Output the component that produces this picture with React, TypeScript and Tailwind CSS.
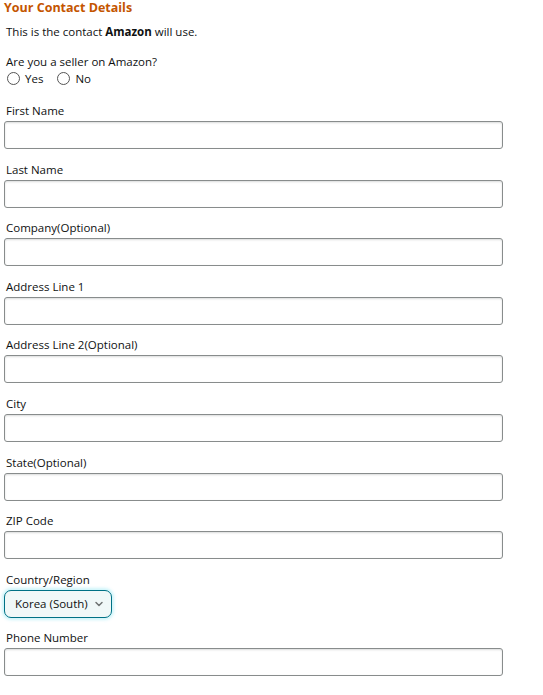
import { ChevronDown } from 'lucide-react'

const fields = [
  'First Name',
  'Last Name',
  'Company(Optional)',
  'Address Line 1',
  'Address Line 2(Optional)',
  'City',
  'State(Optional)',
  'ZIP Code',
]

function Field({ label }: { label: string }) {
  return (
    <div className="h-[58.6px]">
      <div className="pl-[2px] text-[11.5px] leading-[17px] text-[#0f1111]">{label}</div>
      <div className="mt-[2px] h-[28px] w-[499px] rounded-[3px] border border-[#888c8c] bg-white shadow-[inset_0_1px_2px_rgba(15,17,17,0.15)]" />
    </div>
  )
}

function Radio({ label }: { label: string }) {
  return (
    <label className="flex items-center gap-[5px]">
      <span className="h-[13px] w-[13px] rounded-full border border-[#555] bg-white" />
      <span>{label}</span>
    </label>
  )
}

export default function App() {
  return (
    <div className="bg-white pl-[4px] text-[#0f1111]" style={{ fontFamily: '"Open Sans", "Noto Sans", sans-serif' }}>
      <h1 className="text-[12.5px] font-bold leading-[16px] text-[#c45500]">Your Contact Details</h1>
      <p className="mt-[7px] pl-[2px] text-[11.5px] leading-[17px]">
        This is the contact <b>Amazon</b> will use.
      </p>
      <p className="mt-[13px] pl-[2px] text-[11.5px] leading-[17px]">Are you a seller on Amazon?</p>
      <div className="flex gap-[14px] pl-[3px] text-[11.5px] leading-[17px]">
        <Radio label="Yes" />
        <Radio label="No" />
      </div>
      <div className="mt-[15px]">
        {fields.map((f) => (
          <Field key={f} label={f} />
        ))}
        <div className="h-[58.6px]">
          <div className="pl-[2px] text-[11.5px] leading-[17px]">Country/Region</div>
          <div className="mt-[2px] flex h-[28px] w-[108px] items-center justify-between whitespace-nowrap rounded-[7px] border border-[#007185] bg-[#f0f8f8] pl-[10px] pr-[6px] text-[11.5px] shadow-[0_0_3px_2px_rgba(200,243,250,0.9)]">
            <span>Korea (South)</span>
            <ChevronDown size={12} strokeWidth={3} className="text-[#6f7373]" />
          </div>
        </div>
        <Field label="Phone Number" />
      </div>
    </div>
  )
}
